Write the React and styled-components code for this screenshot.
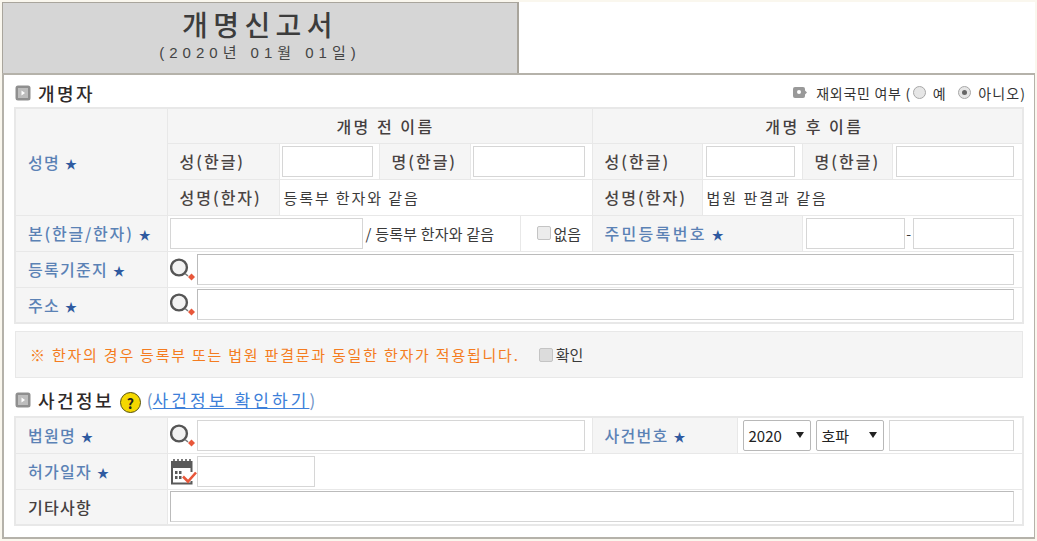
import React from 'react';
import styled, {createGlobalStyle} from 'styled-components';

const Global = createGlobalStyle`
  html, body { margin: 0; padding: 0; background: #faf7ee; }
  body { font-family: "Noto Sans CJK KR", "Liberation Sans", sans-serif; color: #333; }
  * { box-sizing: border-box; }
`;

const Page = styled.div`
  width: 1037px;
  height: 541px;
  overflow: hidden;
  padding: 2px 0 0 2px;
`;

const Sheet = styled.div`
  width: 1033px;
  height: 537px;
  background: #fff;
`;

const TitleBox = styled.div`
  width: 517px;
  height: 71px;
  background: #d6d6d6;
  border: 1px solid #a9a59c;
  border-right-width: 2px;
  border-bottom: 0;
  display: flex;
  flex-direction: column;
  align-items: center;
  padding-top: 7px;
`;

const Title = styled.h1`
  margin: 0;
  font-family: "Liberation Sans", "Noto Sans CJK KR", sans-serif;
  font-size: 28px;
  line-height: 33px;
  font-weight: 500;
  letter-spacing: 5.4px;
  color: #3c3c3c;
`;

const TitleDate = styled.div`
  font-family: "Liberation Sans", "Noto Sans CJK KR", sans-serif;
  font-size: 15px;
  line-height: 20px;
  letter-spacing: 5px;
  color: #444;
`;

const Frame = styled.div`
  width: 1033px;
  height: 466px;
  border: 2px solid #b5b2aa;
  border-right-width: 1px;
  background: #fff;
  padding: 0 10px 0 10px;
`;

const SectionHead = styled.div`
  height: ${p => p.$h || 32}px;
  display: flex;
  align-items: ${p => (p.$end ? 'flex-end' : 'center')};
  justify-content: space-between;
  padding: ${p => (p.$end ? '0 0 3px' : '3px 0 0')};
`;

const HeadLeft = styled.div`
  display: flex;
  align-items: center;
  gap: 6px;
`;

const HeadTitle = styled.h2`
  margin: 0 0 0 1px;
  font-size: 18px;
  line-height: 24px;
  font-weight: 500;
  color: #2f2a2a;
  letter-spacing: 2.4px;
`;

const Bullet = styled.svg`
  width: 16px;
  height: 16px;
  flex: none;
  margin-left: 1px;
`;

const MiniBullet = styled.svg`
  width: 14px;
  height: 11px;
  flex: none;
  margin-right: 9px;
`;

const AbroadRow = styled.div`
  display: flex;
  align-items: center;
  font-size: 14px;
  color: #333;
  margin-right: -2px;
`;

const AbroadText = styled.span`
  letter-spacing: ${p => p.$ls ?? 0.7}px;
  margin-right: ${p => p.$mr ?? 0}px;
`;

const Radio = styled.span`
  width: 13px;
  height: 13px;
  border-radius: 50%;
  border: 1px solid #a8a8a8;
  background: #e6e6e6;
  display: inline-flex;
  align-items: center;
  justify-content: center;
  margin: 0 7px 0 2px;
  &::after {
    content: "";
    width: 5px;
    height: 5px;
    border-radius: 50%;
    background: ${p => (p.$on ? '#666' : 'transparent')};
  }
`;

const Table = styled.table`
  width: 1008px;
  table-layout: fixed;
  border-collapse: collapse;
  border: 2px solid #e8e8e8;
  td, th { border: 1px solid #e8e8e8; padding: 0; }
  tr { height: 36px; }
  tr:first-child { height: ${p => p.$first || 36}px; }
`;

const Label = styled.th`
  background: #f5f5f5;
  font-size: 16px;
  font-weight: 500;
  text-align: left;
  padding-left: 12px !important;
  letter-spacing: ${p => p.$ls ?? 1.3}px;
  white-space: nowrap;
  color: ${p => (p.$plain ? '#45403f' : '#5b82b5')};
`;

const Star = styled.span`
  color: #2f5aa0;
  margin-left: 5px;
  font-size: 12px;
  letter-spacing: 0;
`;

const HeadCell = styled.th`
  background: #f5f5f5;
  font-size: 16px;
  font-weight: 500;
  text-align: center;
  padding-left: ${p => p.$shift}px !important;
  letter-spacing: 2.5px;
  color: #45403f;
`;

const Sub = styled.th`
  background: #f5f5f5;
  font-size: 16px;
  font-weight: 500;
  text-align: left;
  padding-left: 12px !important;
  white-space: nowrap;
  letter-spacing: 2px;
  color: #4a4443;
`;

const Cell = styled.td`
  padding: 0 ${p => p.$right ?? 0}px 0 ${p => p.$left ?? 2}px !important;
  font-size: 14px;
  color: #333;
  white-space: nowrap;
`;

const CellRow = styled.div`
  display: flex;
  align-items: center;
  gap: ${p => p.$gap ?? 0}px;
  padding-left: ${p => p.$pad ?? 0}px;
`;

const Input = styled.input`
  display: block;
  height: 31px;
  width: ${p => (p.$w ? `${p.$w}px` : '100%')};
  flex: ${p => (p.$grow ? 1 : 'none')};
  min-width: 0;
  border: 1px solid #d6d6d6;
  border-top-color: ${p => (p.$dark ? '#bbb' : '#d6d6d6')};
  border-left-color: ${p => (p.$dark ? '#bbb' : '#d6d6d6')};
  background: #fff;
  padding: 0;
  margin: 0;
`;

const Text = styled.span`
  font-size: 15px;
  color: #3a3a3a;
  letter-spacing: ${p => p.$ls ?? 1.9}px;
`;

const Dash = styled.span`
  width: 8px;
  flex: none;
  font-size: 14px;
  text-align: center;
  color: #3a3a3a;
`;

const Check = styled.span`
  width: 14px;
  height: 14px;
  flex: none;
  display: inline-block;
  border: 1px solid #c4c4c4;
  border-radius: 2px;
  background: ${p => p.$tone || '#ececec'};
`;

const Notice = styled.div`
  margin: 7px 0 0 1px;
  width: 1008px;
  height: 47px;
  background: #f5f5f5;
  border: 1px solid #e8e8e8;
  display: flex;
  align-items: center;
  padding-left: 14px;
`;

const NoticeText = styled.span`
  font-size: 15px;
  letter-spacing: 1.78px;
  color: #f47c20;
`;

const NoticeCheck = styled.label`
  display: flex;
  align-items: center;
  gap: 3px;
  margin-left: 19px;
  font-size: 15px;
  color: #3a3a3a;
`;

const CaseLink = styled.a`
  font-size: 17px;
  letter-spacing: 3.1px;
  color: #3d7fd9;
`;

const LinkWrap = styled.span`
  font-size: 17px;
  color: #6f93c7;
`;

const Help = styled.span`
  width: 21px;
  height: 21px;
  border-radius: 50%;
  background: #f5d800;
  border: 1px solid #55500a;
  color: #222;
  font-size: 14px;
  font-weight: 700;
  display: inline-flex;
  align-items: center;
  justify-content: center;
  margin-top: 6px;
`;

const Select = styled.span`
  width: ${p => p.$w}px;
  height: 31px;
  flex: none;
  border: 1px solid #b8b8b8;
  border-radius: 2px;
  background: #fff;
  display: flex;
  align-items: center;
  justify-content: space-between;
  padding: 0 6px 0 5px;
  font-size: 15px;
  color: #222;
  &::after {
    content: "";
    border-left: 4px solid transparent;
    border-right: 4px solid transparent;
    border-top: 6px solid #222;
  }
`;

const IconBox = styled.svg`
  width: 27px;
  height: 27px;
  flex: none;
`;

function BulletIcon() {
  return (
    <Bullet viewBox="0 0 16 16">
      <rect x="0.5" y="0.5" width="15" height="15" rx="2.5" fill="#8f8f8f" />
      <rect x="3" y="3" width="10" height="10" fill="#bdbdbd" />
      <path d="M6.5 5.5 L10 8 L6.5 10.5 Z" fill="#fff" />
    </Bullet>
  );
}

function Magnifier() {
  return (
    <IconBox viewBox="0 0 27 27">
      <circle cx="9" cy="11.5" r="7.9" fill="#f2f2f2" stroke="#555" strokeWidth="2.4" />
      <path d="M15 17.5 L18 20" stroke="#777" strokeWidth="1.6" />
      <path d="M21.5 17.5 L25 21 L21.5 24.5 L18 21 Z" fill="#e8573a" />
    </IconBox>
  );
}

function Calendar() {
  return (
    <IconBox viewBox="0 0 27 27">
      <path d="M1 3 H22.5 V10 H1 Z" fill="#5a5a5a" />
      <path d="M4 1 V3 M8 1 V3 M12 1 V3 M16 1 V3 M20 1 V3" stroke="#5a5a5a" strokeWidth="1.6" />
      <path d="M2 10 V25.5 H21.5 V23 M21.5 10 V14" stroke="#5a5a5a" strokeWidth="2" fill="none" />
      <path d="M5 13 H7.5 V16 H5 Z M9 13 H11.5 V16 H9 Z M5 18 H7.5 V21 H5 Z M9 18 H11.5 V21 H9 Z" fill="#5a5a5a" />
      <path d="M13 18.5 L18 23.5 L26 14.5" stroke="#e8573a" strokeWidth="2.6" fill="none" />
    </IconBox>
  );
}

const NameColumns = () => (
  <colgroup>
    <col style={{width: 152}} />
    <col style={{width: 112}} />
    <col style={{width: 100}} />
    <col style={{width: 91}} />
    <col style={{width: 50}} />
    <col style={{width: 72}} />
    <col style={{width: 110}} />
    <col style={{width: 100}} />
    <col style={{width: 90}} />
    <col style={{width: 131}} />
  </colgroup>
);

const CaseColumns = () => (
  <colgroup>
    <col style={{width: 152}} />
    <col style={{width: 425}} />
    <col style={{width: 145}} />
    <col style={{width: 286}} />
  </colgroup>
);

export default function App() {
  return (
    <Page>
      <Global />
      <Sheet>
        <TitleBox>
          <Title>개명신고서</Title>
          <TitleDate>(2020년 01월 01일)</TitleDate>
        </TitleBox>
        <Frame>
          <SectionHead>
            <HeadLeft>
              <BulletIcon />
              <HeadTitle>개명자</HeadTitle>
            </HeadLeft>
            <AbroadRow>
              <MiniBullet viewBox="0 0 14 11">
                <rect x="0" y="0" width="12" height="11" rx="2" fill="#999" />
                <path d="M12 3.5 L14 5.5 L12 7.5 Z" fill="#999" />
                <circle cx="6" cy="5" r="2" fill="#fff" />
              </MiniBullet>
              <AbroadText>재외국민 여부 (</AbroadText>
              <Radio />
              <AbroadText $mr={10} $ls={0.5}>예</AbroadText>
              <Radio $on />
              <AbroadText $ls={1.1}>아니오)</AbroadText>
            </AbroadRow>
          </SectionHead>
          <Table $first={35}>
            <NameColumns />
            <tbody>
              <tr>
                <Label rowSpan={3} $ls={1.3}>성명<Star>★</Star></Label>
                <HeadCell colSpan={5} $shift={12}>개명 전 이름</HeadCell>
                <HeadCell colSpan={4} $shift={14}>개명 후 이름</HeadCell>
              </tr>
              <tr>
                <Sub>성(한글)</Sub>
                <Cell $right={6}><Input /></Cell>
                <Sub>명(한글)</Sub>
                <Cell colSpan={2} $right={7}><Input /></Cell>
                <Sub>성(한글)</Sub>
                <Cell $left={3} $right={7}><Input /></Cell>
                <Sub>명(한글)</Sub>
                <Cell $left={3} $right={8}><Input /></Cell>
              </tr>
              <tr>
                <Sub>성명(한자)</Sub>
                <Cell colSpan={4} $left={4}><Text>등록부 한자와 같음</Text></Cell>
                <Sub>성명(한자)</Sub>
                <Cell colSpan={3} $left={4}><Text $ls={2}>법원 판결과 같음</Text></Cell>
              </tr>
              <tr>
                <Label $ls={1.8}>본(한글/한자)<Star>★</Star></Label>
                <Cell colSpan={4}>
                  <CellRow $gap={3}>
                    <Input $w={193} />
                    <Text $ls={0.2}>/ 등록부 한자와 같음</Text>
                  </CellRow>
                </Cell>
                <Cell $left={0}>
                  <CellRow $gap={3} $pad={16}>
                    <Check />
                    <Text $ls={0}>없음</Text>
                  </CellRow>
                </Cell>
                <Label colSpan={2} $ls={2.3}>주민등록번호<Star>★</Star></Label>
                <Cell colSpan={2} $left={3} $right={8}>
                  <CellRow>
                    <Input $w={99} />
                    <Dash>-</Dash>
                    <Input $grow />
                  </CellRow>
                </Cell>
              </tr>
              <tr>
                <Label>등록기준지<Star>★</Star></Label>
                <Cell colSpan={9} $right={8}>
                  <CellRow>
                    <Magnifier />
                    <Input $grow $dark />
                  </CellRow>
                </Cell>
              </tr>
              <tr>
                <Label>주소<Star>★</Star></Label>
                <Cell colSpan={9} $right={8}>
                  <CellRow>
                    <Magnifier />
                    <Input $grow $dark />
                  </CellRow>
                </Cell>
              </tr>
            </tbody>
          </Table>
          <Notice>
            <NoticeText>※ 한자의 경우 등록부 또는 법원 판결문과 동일한 한자가 적용됩니다.</NoticeText>
            <NoticeCheck>
              <Check $tone="#dcdcdc" />
              확인
            </NoticeCheck>
          </Notice>
          <SectionHead $h={38} $end>
            <HeadLeft>
              <BulletIcon />
              <HeadTitle>사건정보</HeadTitle>
              <Help>?</Help>
              <LinkWrap>(<CaseLink href="#">사건정보 확인하기</CaseLink>)</LinkWrap>
            </HeadLeft>
          </SectionHead>
          <Table>
            <CaseColumns />
            <tbody>
              <tr>
                <Label>법원명<Star>★</Star></Label>
                <Cell $right={7}>
                  <CellRow>
                    <Magnifier />
                    <Input $grow />
                  </CellRow>
                </Cell>
                <Label>사건번호<Star>★</Star></Label>
                <Cell $left={5} $right={8}>
                  <CellRow $gap={5}>
                    <Select $w={68}>2020</Select>
                    <Select $w={68}>호파</Select>
                    <Input $grow />
                  </CellRow>
                </Cell>
              </tr>
              <tr>
                <Label>허가일자<Star>★</Star></Label>
                <Cell colSpan={3}>
                  <CellRow>
                    <Calendar />
                    <Input $w={118} />
                  </CellRow>
                </Cell>
              </tr>
              <tr>
                <Label $plain>기타사항</Label>
                <Cell colSpan={3} $right={8}><Input $dark /></Cell>
              </tr>
            </tbody>
          </Table>
        </Frame>
      </Sheet>
    </Page>
  );
}
